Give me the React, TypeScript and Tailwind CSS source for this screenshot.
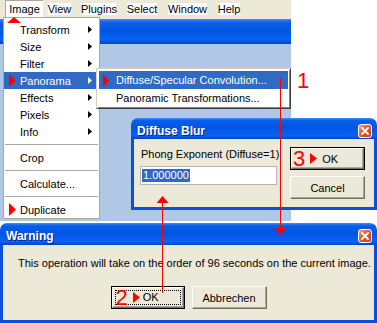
import React from "react";

function RedTri({ w = 7, h = 12 }: { w?: number; h?: number }) {
  return (
    <svg width={w} height={h} className="block shrink-0">
      <polygon points={`0,0 ${w},${h / 2} 0,${h}`} fill="#ff0000" />
    </svg>
  );
}

function SubArrow({ color = "#000" }: { color?: string }) {
  return (
    <svg width={4} height={7} className="block shrink-0">
      <polygon points="0,0 4,3.5 0,7" fill={color} />
    </svg>
  );
}

function CloseBtn() {
  return (
    <div className="w-[14px] h-[14px] rounded-[3px] border border-white bg-[linear-gradient(135deg,#f4a68c_0%,#e2603c_40%,#c53d16_100%)] flex items-center justify-center">
      <svg width="8" height="8" viewBox="0 0 8 8" className="block">
        <path d="M1 1L7 7M7 1L1 7" stroke="#fff" strokeWidth="1.8" strokeLinecap="square" />
      </svg>
    </div>
  );
}

function MenuRow({
  label,
  hi,
  sub,
  mark,
}: {
  label: string;
  hi?: boolean;
  sub?: boolean;
  mark?: boolean;
}) {
  return (
    <div
      className={
        "h-[17px] flex items-center pl-[5px] pr-[7px] " +
        (hi ? "bg-[#316ac5] text-white" : "text-black")
      }
    >
      <div className="w-[11px] shrink-0">{mark ? <RedTri w={7} h={13} /> : null}</div>
      <div className="flex-1 leading-[14px]">{label}</div>
      {sub ? <SubArrow color={hi ? "#fff" : "#000"} /> : null}
    </div>
  );
}

function Sep() {
  return (
    <div className="h-[9px] flex items-center px-[1px]">
      <div className="h-px w-full bg-[#aca899]" />
    </div>
  );
}

function TitleBar({ title, h }: { title: string; h: string }) {
  return (
    <div
      className={
        h +
        " flex items-start justify-between pl-[6px] pr-[5px] pt-[6px] bg-[linear-gradient(to_bottom,#3d8ff8_0%,#0a5fe8_12%,#0055e5_45%,#0a62f2_85%,#0341cc_100%)]"
      }
    >
      <span className="text-white font-bold text-[12px] leading-[14px] [text-shadow:1px_1px_#0a1e8c]">
        {title}
      </span>
      <CloseBtn />
    </div>
  );
}

function Btn({
  children,
  def,
  focus,
  w,
}: {
  children: React.ReactNode;
  def?: boolean;
  focus?: boolean;
  w: string;
}) {
  const inner =
    "w-full h-full border border-t-white border-l-white border-r-[#716f64] border-b-[#716f64] bg-[#ece9d8] shadow-[inset_-1px_-1px_#aca899]";
  if (def) {
    return (
      <div className={w + " h-[23px] border border-black"}>
        <div className={inner + " flex items-center"}>
          {focus ? (
            <div className="mx-[2px] w-full h-[15px] border border-dotted border-black flex items-center">
              {children}
            </div>
          ) : (
            children
          )}
        </div>
      </div>
    );
  }
  return (
    <div className={w + " h-[23px]"}>
      <div className={inner + " flex items-center justify-center"}>{children}</div>
    </div>
  );
}

export default function App() {
  return (
    <div className="relative w-[377px] h-[323px] overflow-hidden bg-white font-['Liberation_Sans',Arial,sans-serif] text-[11px] text-black leading-none">
      {/* background application window */}
      <div className="w-[291px] h-[221px] flex flex-col">
        <div className="h-[19px] bg-[#ece9d8] flex items-start">
          <div className="ml-[5px] w-[38px] h-[17px] bg-white border-t border-l border-[#aca899] border-r-white border-b-white flex items-center justify-center leading-[14px]">
            Image
          </div>
          <div className="ml-[5px] mt-[3px] w-[23px] h-[12px] bg-white flex items-center justify-center">View</div>
          <div className="ml-[11px] mt-[3px] w-[34px] h-[12px] bg-white flex items-center justify-center">Plugins</div>
          <div className="ml-[11px] mt-[3px] w-[30px] h-[12px] bg-white flex items-center justify-center">Select</div>
          <div className="ml-[11px] mt-[3px] w-[39px] h-[12px] bg-white flex items-center justify-center">Window</div>
          <div className="ml-[11px] mt-[3px] w-[22px] h-[12px] bg-white flex items-center justify-center">Help</div>
        </div>
        <div className="h-[25px] bg-[linear-gradient(to_bottom,#3d8ff8_0%,#0a5fe8_14%,#0055e5_50%,#0a62f2_82%,#0341cc_100%)]" />
        <div className="flex-1 bg-[#b0c8e6]" />
      </div>

      {/* Image menu */}
      <div className="absolute left-[3px] top-[17px] w-[97px] h-[202px] border border-[#aca899] bg-white pt-[3px] flex flex-col">
        <MenuRow label="Transform" sub />
        <MenuRow label="Size" sub />
        <MenuRow label="Filter" sub />
        <MenuRow label="Panorama" sub hi mark />
        <MenuRow label="Effects" sub />
        <MenuRow label="Pixels" sub />
        <MenuRow label="Info" sub />
        <Sep />
        <MenuRow label="Crop" />
        <Sep />
        <MenuRow label="Calculate..." />
        <Sep />
        <MenuRow label="Duplicate" mark />
      </div>

      {/* Panorama submenu */}
      <div className="absolute left-[96px] top-[68px] w-[195px] h-[41px] bg-white border border-t-[#d4d0c8] border-l-[#d4d0c8] border-b-[#404040] border-r-[#404040] shadow-[inset_1px_1px_#fff,inset_-1px_-1px_#808080] p-[2px] pt-[2px] flex flex-col">
        <div className="h-[18px] bg-[#316ac5] text-white flex items-center pl-[4px]">
          <div className="w-[13px] shrink-0">
            <RedTri w={6} h={13} />
          </div>
          <span className="leading-[14px]">Diffuse/Specular Convolution...</span>
        </div>
        <div className="h-[17px] flex items-center pl-[17px]">
          <span className="leading-[14px]">Panoramic Transformations...</span>
        </div>
      </div>

      {/* label 1 */}
      <div className="absolute left-[297px] top-[70px] text-[22px] leading-none text-[#ff0000]">1</div>

      {/* Diffuse Blur dialog */}
      <div className="absolute left-[131px] top-[118px] w-[246px] h-[92px] rounded-t-[7px] overflow-hidden flex flex-col">
        <TitleBar title="Diffuse Blur" h="h-[21px]" />
        <div className="flex-1 bg-[#ece9d8] border-x-[3px] border-b-[3px] border-[#0b4fdc] flex">
          <div className="pl-[6px] pt-[8px] flex flex-col">
            <div className="pl-[1px] leading-[14px]">Phong Exponent (Diffuse=1)</div>
            <div className="mt-[5px] w-[137px] h-[19px] bg-white border border-[#b5b5b5] flex items-center pl-[1px]">
              <span className="bg-[#316ac5] text-white leading-[13px] px-[1px]">1.000000</span>
            </div>
          </div>
          <div className="ml-auto mr-[9px] pt-[8px] flex flex-col gap-[6px]">
            <Btn def w="w-[75px]">
              <div className="flex items-center pl-[1px]">
                <span className="text-[22px] leading-[20px] text-[#ff0000]">3</span>
                <div className="ml-[5px]">
                  <RedTri w={7} h={11} />
                </div>
                <span className="ml-[5px] leading-[14px]">OK</span>
              </div>
            </Btn>
            <Btn w="w-[75px]">
              <span className="leading-[14px]">Cancel</span>
            </Btn>
          </div>
        </div>
      </div>

      {/* Warning dialog */}
      <div className="absolute left-0 top-[223px] w-[377px] h-[100px] rounded-t-[7px] overflow-hidden flex flex-col">
        <TitleBar title="Warning" h="h-[22px]" />
        <div className="flex-1 bg-[#ece9d8] border-x-[3px] border-b-[3px] border-[#0b4fdc] flex flex-col">
          <div className="pl-[15px] pt-[11px] leading-[14px] text-[11px] whitespace-nowrap">
            This operation will take on the order of 96 seconds on the current image.
          </div>
          <div className="mt-[16px] flex justify-center gap-[7px]">
            <Btn def focus w="w-[74px]">
              <div className="flex items-center">
                <span className="text-[22px] leading-[14px] text-[#ff0000]">2</span>
                <div className="ml-[5px]">
                  <RedTri w={7} h={11} />
                </div>
                <span className="ml-[3px] leading-[13px]">OK</span>
              </div>
            </Btn>
            <Btn w="w-[75px]">
              <span className="leading-[14px]">Abbrechen</span>
            </Btn>
          </div>
        </div>
      </div>

      {/* red annotation arrows */}
      <svg className="absolute inset-0 pointer-events-none" width={377} height={323}>
        <polygon points="7,23 21,23 14,17" fill="#ff0000" />
        <line x1={280.5} y1={78} x2={280.5} y2={228} stroke="#ff0000" strokeWidth={1} />
        <polygon points="274.5,228 286.5,228 280.5,235" fill="#ff0000" />
        <line x1={162.5} y1={202} x2={162.5} y2={293} stroke="#ff0000" strokeWidth={1} />
        <polygon points="156.5,203 168.5,203 162.5,196" fill="#ff0000" />
      </svg>
    </div>
  );
}
